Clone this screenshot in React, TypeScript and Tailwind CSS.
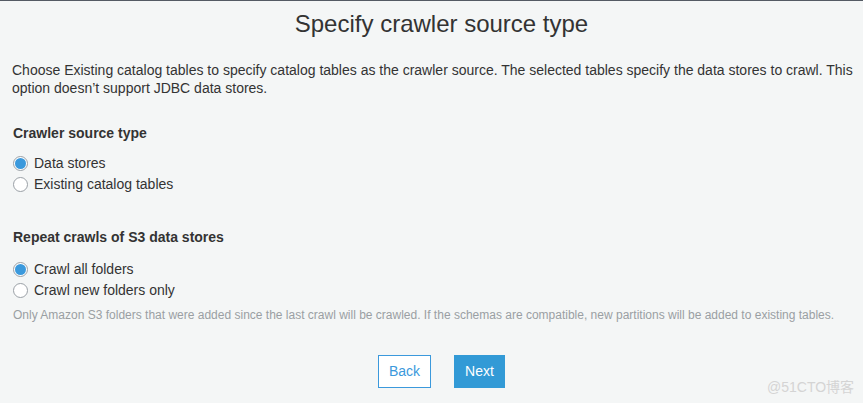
import { useState } from "react";

function Radio({ label, checked, onChange }: { label: string; checked: boolean; onChange: () => void }) {
  return (
    <label className="flex items-center h-[21px] cursor-pointer" onClick={onChange}>
      <span
        className={
          checked
            ? "w-[15px] h-[15px] rounded-full border border-[#9aa0a6] bg-white flex items-center justify-center"
            : "w-[15px] h-[15px] rounded-full border border-[#9aa0a6] bg-white"
        }
      >
        {checked && <span className="w-[11px] h-[11px] rounded-full bg-[#3b99dc]" />}
      </span>
      <span className="ml-[6px] text-[14px] text-[#333]">{label}</span>
    </label>
  );
}

export default function App() {
  const [source, setSource] = useState("data");
  const [repeat, setRepeat] = useState("all");

  return (
    <div
      className="relative w-[863px] h-[403px] bg-[#f4f6f6] border-t border-[#545b64] overflow-hidden text-[#333]"
      style={{ fontFamily: "'Liberation Sans', Arial, sans-serif" }}
    >
      <h1 className="text-center text-[24px] leading-[28px] pt-[9px] pl-[20px] text-[#333]">Specify crawler source type</h1>

      <p className="mt-[23px] pl-[12px] pr-[4px] text-[14px] leading-[18px]">
        Choose Existing catalog tables to specify catalog tables as the crawler source. The selected tables specify the
        data stores to crawl. This option doesn’t support JDBC data stores.
      </p>

      <div className="px-[13px]">
        <h2 className="mt-[27px] text-[14px] font-bold leading-[18px]">Crawler source type</h2>
        <div className="mt-[11px]">
          <Radio label="Data stores" checked={source === "data"} onChange={() => setSource("data")} />
          <Radio label="Existing catalog tables" checked={source === "catalog"} onChange={() => setSource("catalog")} />
        </div>

        <h2 className="mt-[33px] text-[14px] font-bold leading-[18px]">Repeat crawls of S3 data stores</h2>
        <div className="mt-[13px]">
          <Radio label="Crawl all folders" checked={repeat === "all"} onChange={() => setRepeat("all")} />
          <Radio label="Crawl new folders only" checked={repeat === "new"} onChange={() => setRepeat("new")} />
        </div>
        <p className="mt-[7px] text-[12px] leading-[14px] text-[#9a9fa3]">
          Only Amazon S3 folders that were added since the last crawl will be crawled. If the schemas are compatible, new
          partitions will be added to existing tables.
        </p>
      </div>

      <div className="flex justify-center gap-[23px] mt-[33px] pl-[20px]">
        <button className="w-[53px] h-[33px] border border-[#3b99dc] bg-white text-[#3b99dc] text-[14px]">Back</button>
        <button className="w-[51px] h-[33px] bg-[#329ad6] text-white text-[14px]">Next</button>
      </div>

      <div
        className="absolute left-[767px] top-[376px] text-[14px] text-[#d4d4d4]"
        style={{ fontFamily: "'Liberation Sans', 'Noto Sans CJK SC', sans-serif" }}
      >
        @51CTO博客
      </div>
    </div>
  );
}
